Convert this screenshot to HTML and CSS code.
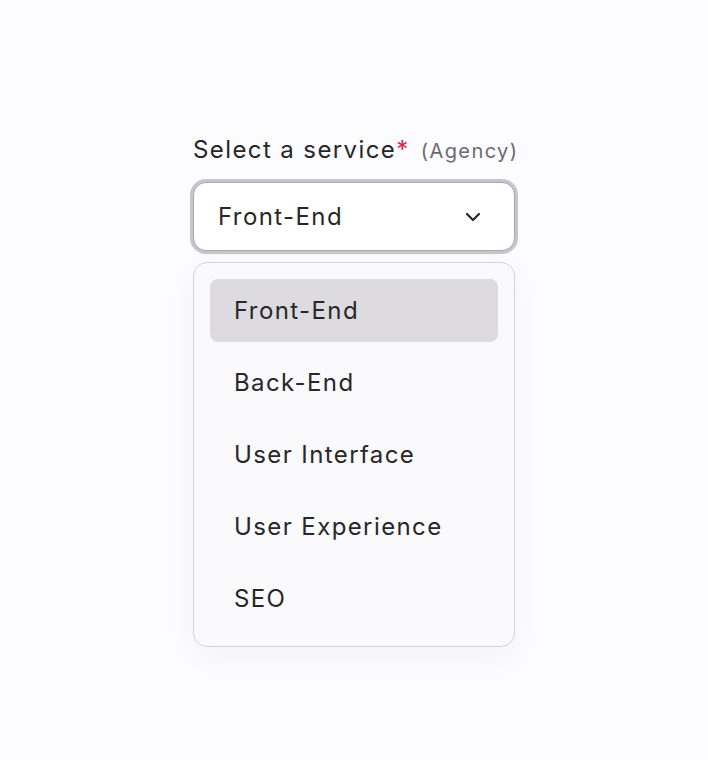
FILE: index.html
```html
<!DOCTYPE html>
<html lang="en">
  <head>
    <meta charset="UTF-8" />
    <meta name="viewport" content="width=device-width, initial-scale=1.0" />
    <title>Select a service</title>
    <link rel="stylesheet" href="styles.css">
  </head>
  <body>
    <div class="field">
      <label class="label" for="service">
        Select a service<span class="required">*</span>
        <span class="hint">(Agency)</span>
      </label>

      <button class="select" id="service" type="button">
        <span>Front-End</span>
        <svg class="chevron" width="20" height="20" viewBox="0 0 20 20" fill="none" stroke="currentColor" stroke-width="2.2" stroke-linecap="round" stroke-linejoin="round">
          <path d="M4 7l6 6 6-6" />
        </svg>
      </button>

      <ul class="options">
        <li class="option active">Front-End</li>
        <li class="option">Back-End</li>
        <li class="option">User Interface</li>
        <li class="option">User Experience</li>
        <li class="option">SEO</li>
      </ul>
    </div>
  </body>
</html>
```

FILE: styles.css
```css
* {
  margin: 0;
  padding: 0;
  box-sizing: border-box;
}

body {
  font-family: 'Inter', 'Noto Sans', sans-serif;
  background: #fcfbfd;
  color: #27272a;
  min-height: 100vh;
  display: flex;
  justify-content: center;
  padding-top: 134px;
  letter-spacing: 1.4px;
}

.field {
  width: 322px;
  display: flex;
  flex-direction: column;
}

.label {
  font-size: 24px;
  line-height: 32px;
  margin-bottom: 15px;
  color: #27272a;
  white-space: nowrap;
}

.required {
  color: #e11d48;
}

.hint {
  font-size: 20px;
  color: #6b6a72;
  margin-left: 3px;
}

.select {
  display: flex;
  align-items: center;
  justify-content: space-between;
  height: 69px;
  padding: 0 31px 0 24px;
  background: #ffffff;
  border: 1px solid #a9a8ad;
  border-radius: 13px;
  box-shadow: 0 0 0 3px #c6c5c9, 0 2px 4px rgba(0,0,0,0.08);
  font-family: inherit;
  font-size: 24px;
  letter-spacing: inherit;
  color: #27272a;
  text-align: left;
}

.chevron {
  color: #27272a;
}

.options {
  list-style: none;
  margin-top: 11px;
  padding: 16px;
  background: #faf9fb;
  border: 1px solid #d4d4d8;
  border-radius: 14px;
  box-shadow: 0 10px 30px rgba(0,0,0,0.04);
  display: flex;
  flex-direction: column;
  gap: 9px;
}

.option {
  height: 63px;
  display: flex;
  align-items: center;
  padding-left: 24px;
  font-size: 24px;
  border-radius: 8px;
  color: #27272a;
}

.option.active {
  background: #dddbdf;
}
```
